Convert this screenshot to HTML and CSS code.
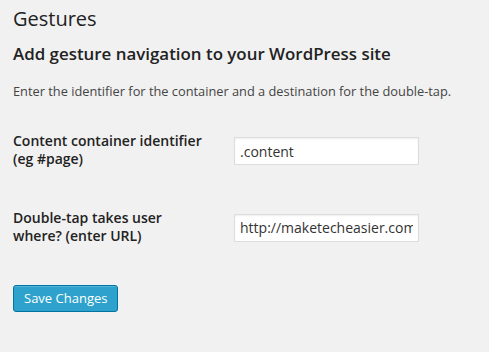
FILE: index.html
```html
<!DOCTYPE html>
<html lang="en">
<head>
    <meta charset="UTF-8">
    <meta name="viewport" content="width=device-width, initial-scale=1.0">
    <title>Gestures</title>
    <link rel="stylesheet" href="styles.css">
</head>
<body>

<div class="wrap">
    <h2>Gestures</h2>

    <h3>Add gesture navigation to your WordPress site</h3>
    <p class="intro">Enter the identifier for the container and a destination for the double-tap.</p>

    <table class="form-table">
        <tbody>
            <tr>
                <th><label for="container-id">Content container identifier (eg #page)</label></th>
                <td><input type="text" id="container-id" class="regular-text" value=".content"></td>
            </tr>
            <tr>
                <th><label for="tap-url">Double-tap takes user where? (enter URL)</label></th>
                <td><input type="text" id="tap-url" class="regular-text" value="http://maketecheasier.com"></td>
            </tr>
        </tbody>
    </table>

    <p class="submit">
        <button type="submit" class="button-primary">Save Changes</button>
    </p>
</div>

</body>
</html>
```

FILE: styles.css
```css
body {
    font-family: "Open Sans", sans-serif;
    background-color: #f1f1f1;
    color: #444;
    margin: 0;
    font-size: 13px;
}
.wrap {
    padding: 0 13px;
}
h2 {
    font-size: 20px;
    font-weight: 400;
    color: #222;
    line-height: 29px;
    margin: 0;
    padding: 4px 0 4px;
}
h3 {
    font-size: 16.9px;
    font-weight: 600;
    color: #222;
    margin: 5px 0 0;
    line-height: 24px;
}
.intro {
    font-size: 12.8px;
    margin: 15px 0 0;
    line-height: 20px;
}
.form-table {
    border-collapse: collapse;
    margin-top: 11px;
}
.form-table th {
    width: 196px;
    padding: 20px 15px 20.5px 0;
    text-align: left;
    vertical-align: top;
    font-size: 14px;
    font-weight: 600;
    line-height: 1.3;
    color: #222;
}
.form-table td {
    padding: 25px 0 0 10px;
    vertical-align: top;
}
.regular-text {
    box-sizing: border-box;
    width: 185px;
    height: 28px;
    padding: 3px 5px;
    font-family: "Open Sans", sans-serif;
    font-size: 14px;
    color: #333;
    background-color: #fff;
    border: 1px solid #ddd;
    box-shadow: inset 0 1px 2px rgba(0, 0, 0, 0.07);
    outline: none;
}
.submit {
    margin: 19px 0 0;
}
.button-primary {
    box-sizing: border-box;
    height: 27px;
    padding: 0 10px 1px;
    font-family: "Open Sans", sans-serif;
    font-size: 13px;
    color: #fff;
    background-color: #2ea2cc;
    border: 1px solid #0074a2;
    border-radius: 3px;
    box-shadow: inset 0 1px 0 rgba(120, 200, 230, 0.5);
    cursor: pointer;
}
```
